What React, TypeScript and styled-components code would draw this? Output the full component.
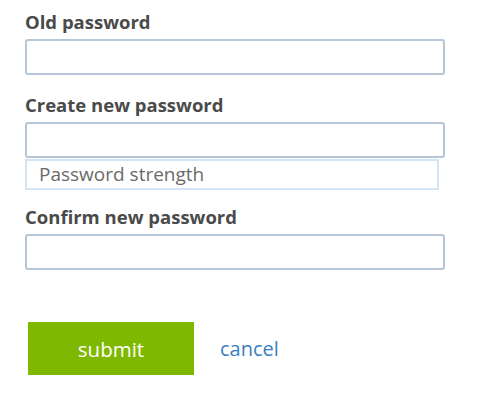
import styled, { createGlobalStyle } from 'styled-components';

const GlobalStyle = createGlobalStyle`
  body {
    margin: 0;
    background: #fff;
    font-family: "Open Sans", "Noto Sans", sans-serif;
  }
`;

const Form = styled.form`
  display: flex;
  flex-direction: column;
  padding: 8px 38px 0 25px;
  width: 420px;
`;

const Field = styled.div<{ $gap?: number }>`
  display: flex;
  flex-direction: column;
  margin-bottom: ${(p) => p.$gap ?? 16}px;
`;

const Label = styled.label`
  font-size: 18.5px;
  font-weight: 700;
  color: #4a4a4a;
  line-height: 24px;
  padding-top: 2px;
  margin-bottom: 5px;
`;

const Input = styled.input`
  box-sizing: border-box;
  width: 420px;
  height: 36px;
  border: 2px solid #b4c6d8;
  border-radius: 3px;
  background: #fff;
  outline: none;
`;

const Strength = styled.div`
  box-sizing: border-box;
  width: 414px;
  height: 31px;
  margin-top: 1px;
  padding-left: 12px;
  border: 2px solid #d4e4f4;
  font-size: 19px;
  line-height: 27px;
  color: #6a6a6a;
`;

const Actions = styled.div`
  display: flex;
  align-items: center;
  gap: 26px;
  margin-top: 36px;
  padding-left: 3px;
`;

const Submit = styled.button`
  width: 166px;
  height: 53px;
  border: none;
  background: #7fb800;
  color: #fff;
  font-family: inherit;
  font-size: 20.5px;
  cursor: pointer;
`;

const Cancel = styled.a`
  font-size: 20px;
  color: #3b7fbf;
  text-decoration: none;
  cursor: pointer;
`;

export default function App() {
  return (
    <>
      <GlobalStyle />
      <Form onSubmit={(e) => e.preventDefault()}>
        <Field>
          <Label>Old password</Label>
          <Input type="password" />
        </Field>
        <Field $gap={13}>
          <Label>Create new password</Label>
          <Input type="password" />
          <Strength>Password strength</Strength>
        </Field>
        <Field>
          <Label>Confirm new password</Label>
          <Input type="password" />
        </Field>
        <Actions>
          <Submit type="submit">submit</Submit>
          <Cancel>cancel</Cancel>
        </Actions>
      </Form>
    </>
  );
}
